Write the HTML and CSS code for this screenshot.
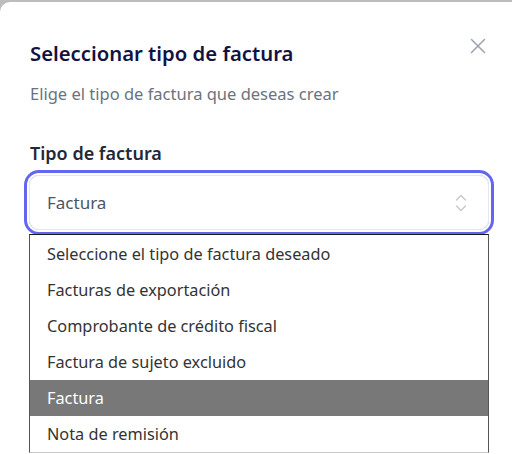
FILE: index.html
```html
<!DOCTYPE html>
<html lang="es">
<head>
<meta charset="utf-8">
<link rel="stylesheet" href="styles.css">
</head>
<body>
<div class="modal">
  <div class="header">
    <h2 class="title">Seleccionar tipo de factura</h2>
    <button class="close" aria-label="Cerrar">
      <svg width="16" height="16" viewBox="0 0 16 16"><path d="M1.5 1.5 L14.5 14.5 M14.5 1.5 L1.5 14.5" stroke="#9ca3af" stroke-width="1.5" fill="none" stroke-linecap="round"/></svg>
    </button>
  </div>
  <p class="subtitle">Elige el tipo de factura que deseas crear</p>
  <label class="label">Tipo de factura</label>
  <div class="field">
    <div class="select">
      <span class="value">Factura</span>
      <svg class="chev" width="12" height="20" viewBox="0 0 12 20"><path d="M1.5 7 L6 2.5 L10.5 7 M1.5 13 L6 17.5 L10.5 13" stroke="#c3c7ce" stroke-width="1.3" fill="none" stroke-linecap="round" stroke-linejoin="round"/></svg>
    </div>
    <ul class="options">
      <li class="opt">Seleccione el tipo de factura deseado</li>
      <li class="opt">Facturas de exportación</li>
      <li class="opt">Comprobante de crédito fiscal</li>
      <li class="opt">Factura de sujeto excluido</li>
      <li class="opt selected">Factura</li>
      <li class="opt">Nota de remisión</li>
    </ul>
  </div>
</div>
</body>
</html>
```
FILE: styles.css
```css
* { box-sizing: border-box; }
html, body { margin: 0; padding: 0; }
body {
  background: #bdbdbd;
  font-family: "Noto Sans", "Open Sans", sans-serif;
  height: 454px;
  overflow: hidden;
}
.modal {
  margin-top: 2px;
  background: #fff;
  border-top-left-radius: 10px;
  height: 452px;
  padding: 37px 23px 0 29px;
}
.header {
  display: flex;
  justify-content: space-between;
  align-items: flex-start;
}
.title {
  margin: 0 0 0 1px;
  font-size: 20.3px;
  line-height: 28px;
  font-weight: 600;
  color: #111344;
}
.close {
  background: none;
  border: 0;
  padding: 0;
  margin: -1px 3px 0 0;
  width: 16px;
  height: 16px;
  display: flex;
}
.subtitle {
  margin: 15px 0 0 1px;
  font-size: 16.5px;
  line-height: 24px;
  color: #6b7280;
}
.label {
  display: block;
  margin: 34px 0 0 1px;
  font-size: 18px;
  line-height: 26px;
  font-weight: 600;
  color: #1f2937;
}
.field {
  position: relative;
  margin-top: 9px;
  width: 460px;
}
.select {
  height: 55px;
  border: 1px solid #e5e7eb;
  border-radius: 10px;
  box-shadow: 0 0 0 2px #fff, 0 0 0 5px #6366f1;
  display: flex;
  align-items: center;
  justify-content: space-between;
  padding: 0 21px 0 17px;
}
.value {
  font-size: 17px;
  color: #4b5563;
}
.chev { display: block; }
.options {
  position: absolute;
  left: 0;
  top: 59px;
  width: 460px;
  margin: 0;
  padding: 1px 0 0;
  list-style: none;
  background: #fff;
  border: 1px solid #555;
  border-top-color: #1a1a1a;
  border-bottom-color: #c8c8c8;
}
.opt {
  height: 36px;
  line-height: 36px;
  padding-left: 17px;
  font-size: 16.3px;
  color: #333;
}
.opt.selected {
  background: #787878;
  color: #fff;
}
```
